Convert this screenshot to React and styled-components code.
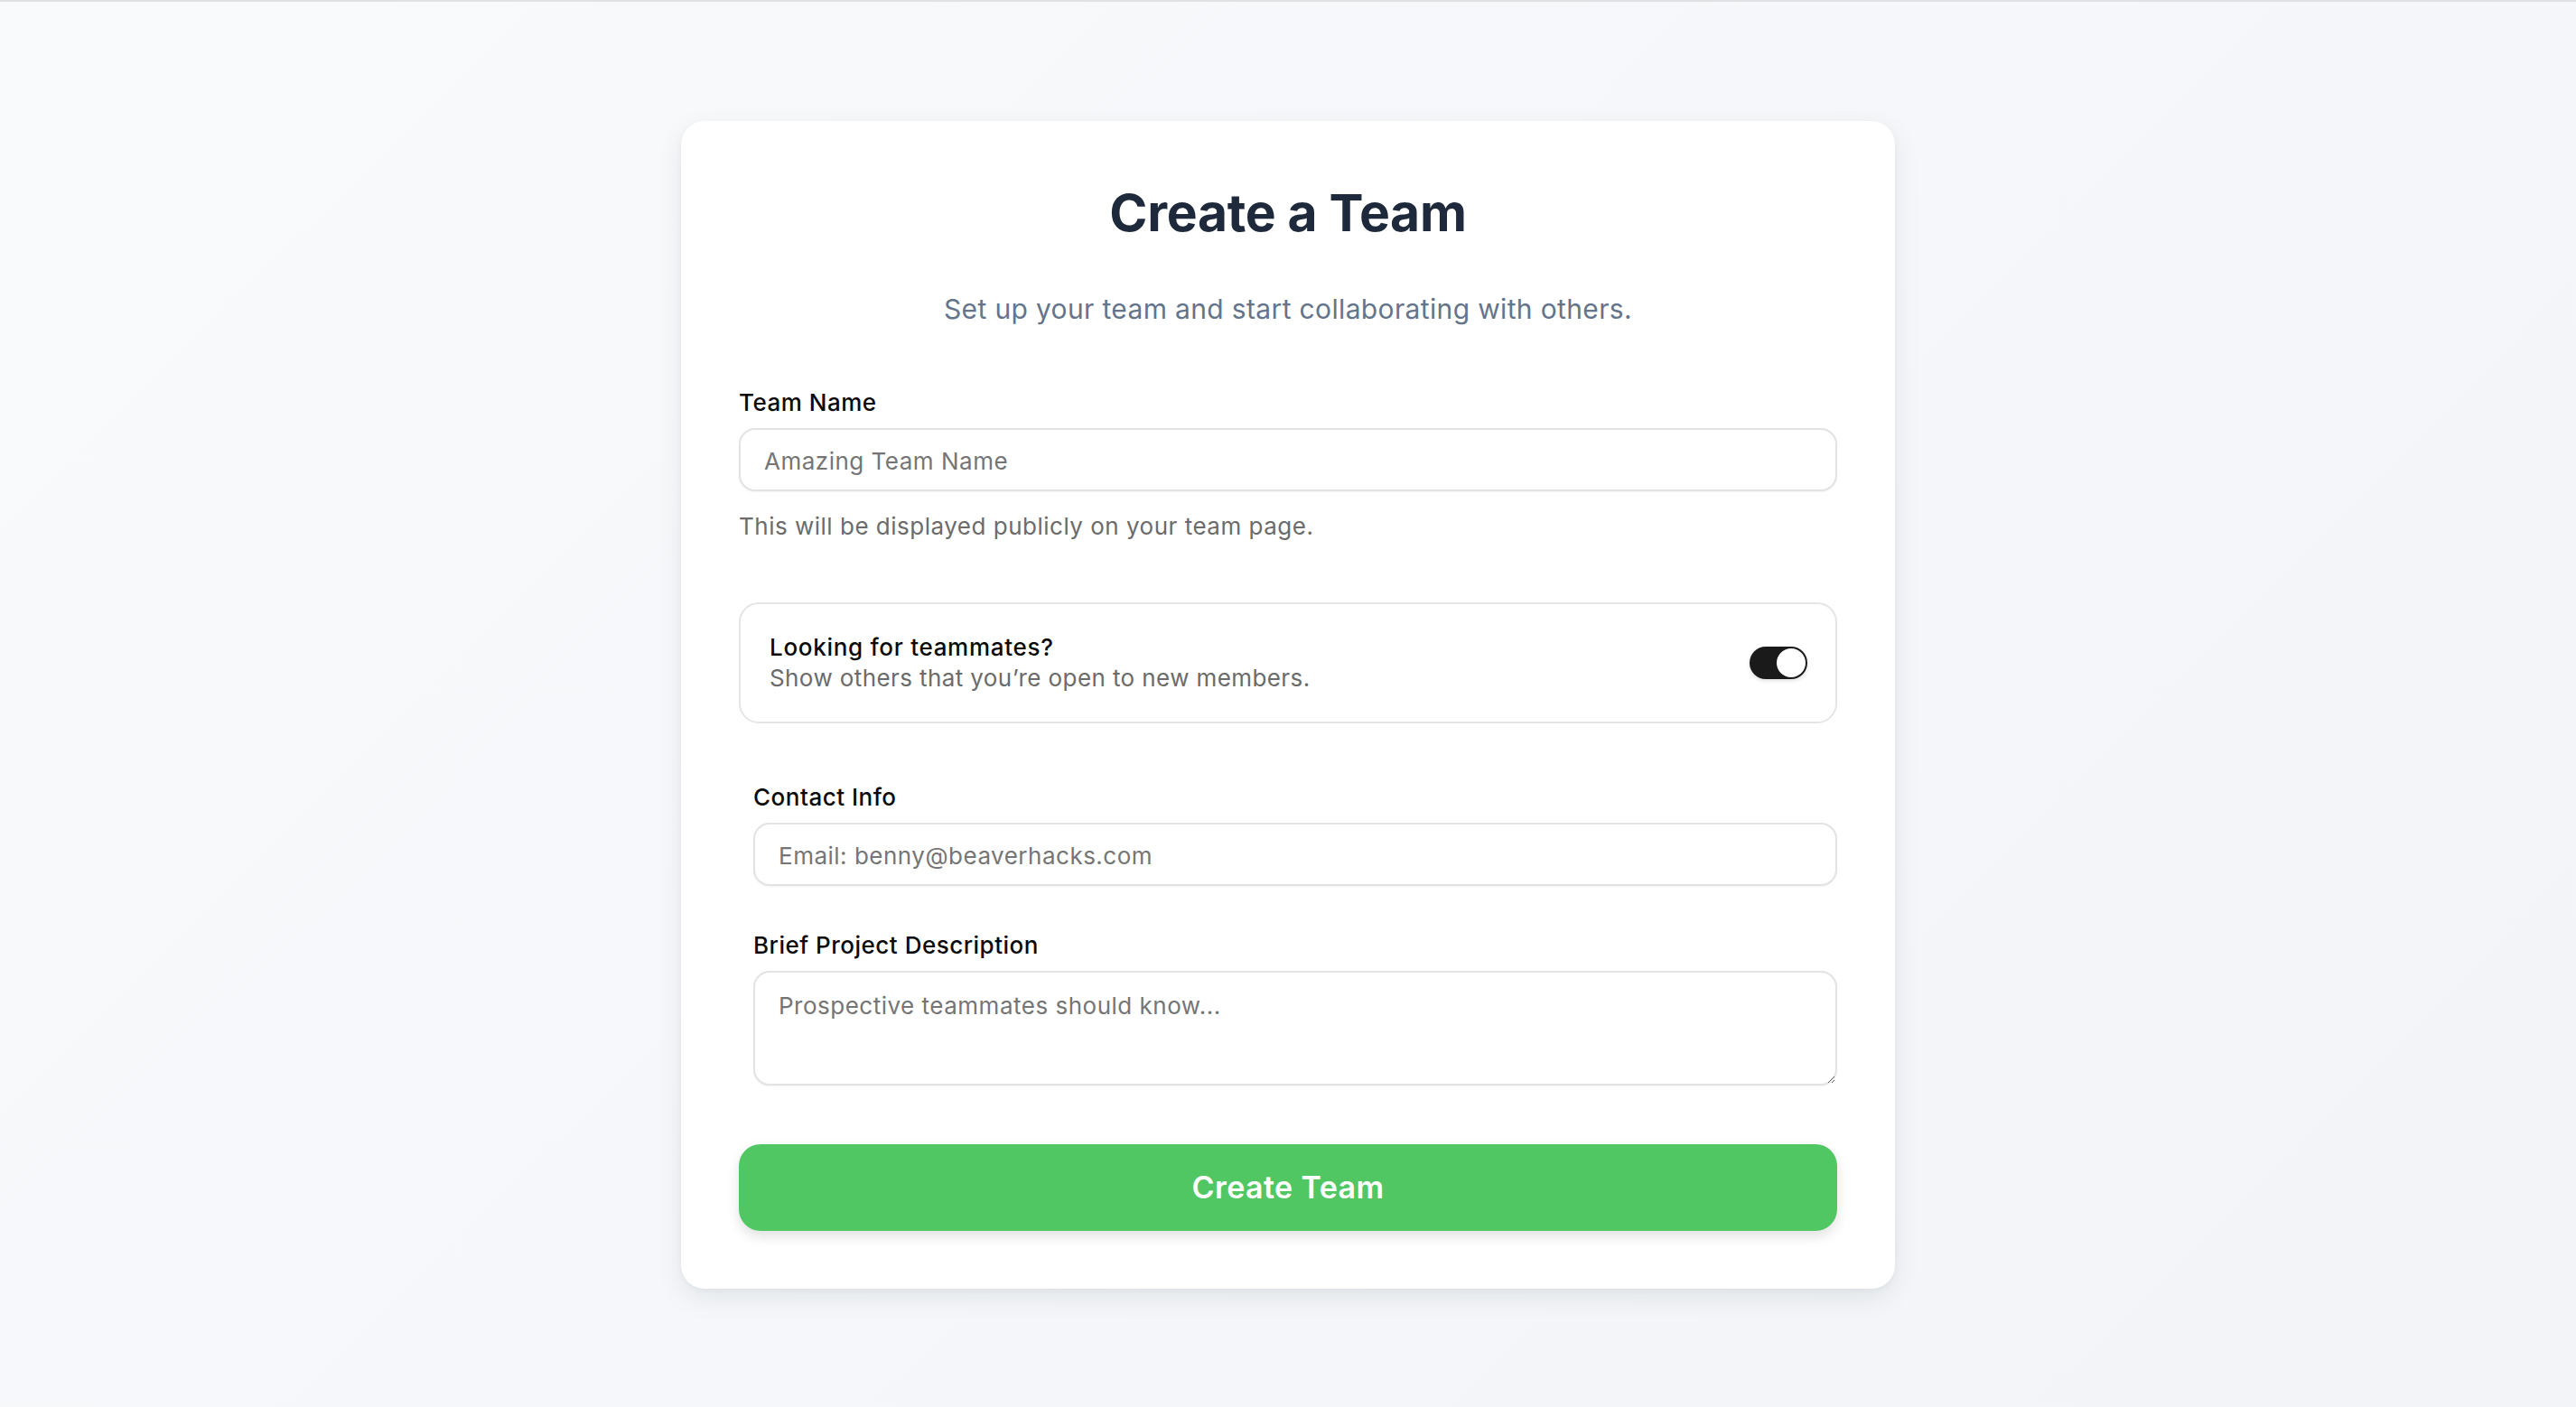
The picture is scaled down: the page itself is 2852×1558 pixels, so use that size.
import React from 'react'
import styled, { createGlobalStyle } from 'styled-components'

const GlobalStyle = createGlobalStyle`
  * { box-sizing: border-box; }
  body {
    margin: 0;
    font-family: Inter, "Noto Sans", "Liberation Sans", sans-serif;
  }
`

const Page = styled.div`
  min-height: 100vh;
  display: flex;
  align-items: center;
  justify-content: center;
  border-top: 2px solid #dfe1e3;
  background: linear-gradient(135deg, #f8fafc 0%, #f2f4f7 100%);
`

const Card = styled.form`
  width: 1344px;
  background: #fff;
  border-radius: 26px;
  padding: 64px;
  box-shadow: 0 10px 30px rgba(15, 23, 42, 0.08), 0 2px 6px rgba(15, 23, 42, 0.04);
  display: flex;
  flex-direction: column;
`

const Title = styled.h1`
  margin: 3px 0 0;
  text-align: center;
  font-size: 57px;
  line-height: 70px;
  font-weight: 700;
  color: #1e293b;
  letter-spacing: -0.3px;
`

const Subtitle = styled.p`
  margin: 54px 0 0;
  text-align: center;
  font-size: 30px;
  line-height: 35px;
  letter-spacing: 0.35px;
  color: #64748b;
`

const Field = styled.div`
  display: flex;
  flex-direction: column;
  margin-top: ${p => p.top}px;
  padding-left: ${p => (p.indent ? 16 : 0)}px;
`

const Label = styled.label`
  padding-top: 2px;
  font-size: 26px;
  line-height: 30px;
  font-weight: 500;
  letter-spacing: 0.5px;
  color: #0a0a0a;
  margin-bottom: 13px;
`

const Input = styled.input`
  height: 70px;
  width: 100%;
  border: 2px solid #e3e3e3;
  border-radius: 18px;
  padding: 4px 26px 0;
  font-family: inherit;
  font-size: 26px;
  letter-spacing: 0.5px;
  color: #111;
  background: #fff;
  box-shadow: 0 1px 2px rgba(0, 0, 0, 0.05);
  outline: none;
  &::placeholder { color: #757575; }
`

const TextArea = styled.textarea`
  height: 127px;
  width: 100%;
  border: 2px solid #e3e3e3;
  border-radius: 18px;
  padding: 18px 26px 14px;
  font-family: inherit;
  font-size: 26px;
  line-height: 37px;
  letter-spacing: 0.5px;
  color: #111;
  background: #fff;
  box-shadow: 0 1px 2px rgba(0, 0, 0, 0.05);
  outline: none;
  &::placeholder { color: #757575; }
`

const Helper = styled.p`
  margin: 24px 0 0;
  font-size: 26px;
  line-height: 30px;
  letter-spacing: 0.5px;
  color: #6b6b6b;
`

const ToggleBox = styled.div`
  margin-top: 69px;
  height: 134px;
  border: 2px solid #e5e5e5;
  border-radius: 22px;
  padding: 0 31px 0 32px;
  display: flex;
  align-items: center;
  justify-content: space-between;
`

const ToggleText = styled.div`
  display: flex;
  flex-direction: column;
`

const ToggleTitle = styled.span`
  font-size: 26px;
  line-height: 34px;
  font-weight: 500;
  letter-spacing: 0.7px;
  color: #0a0a0a;
`

const ToggleSub = styled.span`
  font-size: 26px;
  line-height: 34px;
  letter-spacing: 0.4px;
  color: #6b6b6b;
`

const Switch = styled.button`
  width: 64px;
  height: 36px;
  border: none;
  border-radius: 18px;
  padding: 2px;
  background: #1a1a1a;
  display: flex;
  justify-content: ${p => (p.on ? 'flex-end' : 'flex-start')};
  box-shadow: 0 2px 4px rgba(0, 0, 0, 0.12);
  cursor: pointer;
`

const Knob = styled.span`
  width: 32px;
  height: 32px;
  border-radius: 50%;
  background: #fff;
`

const SubmitButton = styled.button`
  margin-top: 65px;
  height: 96px;
  width: 100%;
  border: none;
  border-radius: 24px;
  background: #51c764;
  color: #fff;
  font-family: inherit;
  font-size: 34px;
  font-weight: 600;
  letter-spacing: 0.4px;
  box-shadow: 0 6px 14px rgba(0, 0, 0, 0.12);
  cursor: pointer;
`

function App() {
  const [looking, setLooking] = React.useState(true)

  return (
    <Page>
      <GlobalStyle />
      <Card onSubmit={e => e.preventDefault()}>
        <Title>Create a Team</Title>
        <Subtitle>Set up your team and start collaborating with others.</Subtitle>

        <Field top={69}>
          <Label>Team Name</Label>
          <Input placeholder="Amazing Team Name" />
        </Field>
        <Helper>This will be displayed publicly on your team page.</Helper>

        <ToggleBox>
          <ToggleText>
            <ToggleTitle>Looking for teammates?</ToggleTitle>
            <ToggleSub>Show others that you’re open to new members.</ToggleSub>
          </ToggleText>
          <Switch type="button" on={looking ? 1 : 0} onClick={() => setLooking(!looking)}>
            <Knob />
          </Switch>
        </ToggleBox>

        {looking && (
          <>
            <Field top={65} indent>
              <Label>Contact Info</Label>
              <Input placeholder="Email: benny@beaverhacks.com" />
            </Field>
            <Field top={49} indent>
              <Label>Brief Project Description</Label>
              <TextArea placeholder="Prospective teammates should know..." />
            </Field>
          </>
        )}

        <SubmitButton type="submit">Create Team</SubmitButton>
      </Card>
    </Page>
  )
}

export default App
